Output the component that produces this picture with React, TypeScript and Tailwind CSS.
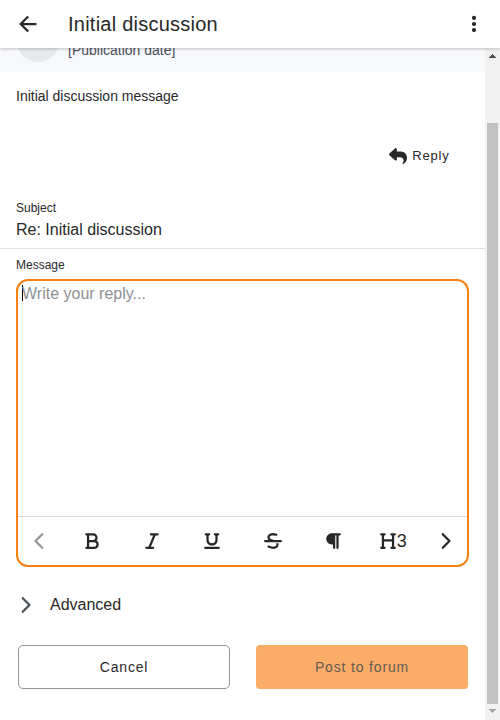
import React from 'react';
import {
  FaBold,
  FaItalic,
  FaUnderline,
  FaStrikethrough,
  FaParagraph,
  FaHeading,
  FaChevronLeft,
  FaChevronRight,
} from 'react-icons/fa6';

function Header() {
  return (
    <header className="relative z-10 flex h-12 shrink-0 items-center bg-white pl-4 pr-[14px] shadow-[0_1px_3px_rgba(0,0,0,0.22)]">
      <button aria-label="Back" className="flex size-6 items-center justify-center">
        <svg viewBox="0 0 512 512" className="size-6" fill="none" stroke="currentColor" strokeWidth="48" strokeLinecap="square" strokeMiterlimit="10">
          <path d="M244 400L100 256l144-144M120 256h292" />
        </svg>
      </button>
      <h1 className="ml-7 flex-1 text-xl leading-6 tracking-[0.24px]">Initial discussion</h1>
      <button aria-label="More options" className="flex size-6 items-center justify-center">
        <svg viewBox="0 0 24 24" className="size-6" fill="currentColor">
          <circle cx="12" cy="5.9" r="2.1" />
          <circle cx="12" cy="12" r="2.1" />
          <circle cx="12" cy="18.1" r="2.1" />
        </svg>
      </button>
    </header>
  );
}

function ReplyIcon() {
  return (
    <svg viewBox="0 0 512 512" className="mr-[5.5px] size-[18px]" fill="currentColor">
      <path d="M205 34.8c11.5 5.1 19 16.6 19 29.2v64H336c97.2 0 176 78.8 176 176c0 113.3-81.5 163.9-100.2 174.1c-2.5 1.4-5.3 1.9-8.1 1.9c-10.9 0-19.7-8.9-19.7-19.7c0-7.5 4.3-14.4 9.8-19.5c9.4-8.8 22.2-26.4 22.2-56.7c0-53-43-96-96-96H224v64c0 12.6-7.4 24.1-19 29.2s-25 3-34.4-5.4l-160-144C3.9 225.7 0 217.1 0 208s3.9-17.7 10.6-23.8l160-144c9.4-8.5 22.9-10.6 34.4-5.4z" />
    </svg>
  );
}

function Post() {
  return (
    <section className="shrink-0">
      <div className="flex h-6 items-end overflow-hidden bg-[#f8f9fb] pl-4">
        <div className="mb-[10px] size-11 shrink-0 rounded-full bg-[#e7eaed]" />
        <p className="mb-3 ml-2 text-sm leading-5 text-[#4b525b]">[Publication date]</p>
      </div>
      <p className="mt-[14px] pl-4 text-sm leading-5">Initial discussion message</p>
      <div className="mt-[40px] flex h-5 justify-end pr-[35.5px]">
        <button className="flex items-center text-[13px] tracking-[0.78px]">
          <ReplyIcon />
          Reply
        </button>
      </div>
    </section>
  );
}

function Editor() {
  return (
    <div className="ml-4 mr-4 mt-[6px] flex h-72 w-[453px] shrink-0 flex-col overflow-hidden rounded-xl border-2 border-[#f98012]">
      <div className="flex flex-1 items-start pl-1 pt-1">
        <span className="h-4 w-px bg-black" />
        <span className="-ml-px text-base leading-[18px] text-[#8d9094]">Write your reply...</span>
      </div>
      <div className="flex h-[49px] items-center border-t border-[#dddddd]">
        <div className="flex w-[43px] justify-center text-[#949494]">
          <FaChevronLeft size={18} />
        </div>
        <div className="grid flex-1 grid-cols-6 place-items-center">
          <FaBold size={18} className="ml-[2px]" />
          <FaItalic size={18} />
          <FaUnderline size={18} />
          <FaStrikethrough size={18} />
          <FaParagraph size={18} />
          <span className="mr-[2px] flex items-center text-lg leading-[18px]">
            <FaHeading size={18} />3
          </span>
        </div>
        <div className="flex w-[43px] justify-center pr-[2px]">
          <FaChevronRight size={18} />
        </div>
      </div>
    </div>
  );
}

function ReplyForm() {
  return (
    <form className="flex flex-col">
      <div className="mt-[34px] h-[49px] shrink-0 border-b border-[#dedede] pl-4">
        <label className="block text-xs leading-4">Subject</label>
        <div className="mt-1 text-base leading-5">Re: Initial discussion</div>
      </div>
      <label className="mt-2 block pl-4 text-xs leading-4">Message</label>
      <Editor />
      <div className="mt-7 flex h-5 items-center pl-4">
        <FaChevronRight size={18} className="text-[#4b525b]" />
        <span className="ml-4 text-base leading-5">Advanced</span>
      </div>
      <div className="mt-[30px] flex gap-[26px] px-[18px] text-sm tracking-[0.84px]">
        <button type="button" className="h-11 w-[212px] shrink-0 rounded-[5px] border border-[#8f959e]">
          Cancel
        </button>
        <button type="button" className="h-11 w-[212px] shrink-0 rounded-[4px] bg-[#fbac66] text-[#625b55]">
          Post to forum
        </button>
      </div>
    </form>
  );
}

function Scrollbar() {
  return (
    <div className="flex w-[15px] shrink-0 flex-col bg-[#f1f1f1] pb-px">
      <svg viewBox="0 0 15 15" className="size-[15px] shrink-0" shapeRendering="crispEdges">
        <path d="M4 10 7.5 6 11 10Z" fill="#505050" />
      </svg>
      <div className="ml-[2px] mt-[60px] w-[11px] flex-1 bg-[#c1c1c1]" />
      <svg viewBox="0 0 15 15" className="size-[15px] shrink-0" shapeRendering="crispEdges">
        <path d="M4 5 7.5 9 11 5Z" fill="#a3a3a3" />
      </svg>
    </div>
  );
}

export default function App() {
  return (
    <div className="flex h-[720px] w-[500px] flex-col overflow-hidden bg-white font-['Liberation_Sans',Arial,sans-serif] text-[#282828]">
      <Header />
      <div className="flex min-h-0 flex-1">
        <main className="flex min-w-0 flex-1 flex-col">
          <Post />
          <ReplyForm />
        </main>
        <Scrollbar />
      </div>
    </div>
  );
}
